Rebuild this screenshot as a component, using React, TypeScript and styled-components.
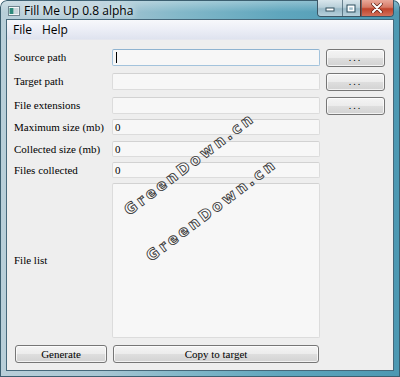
import React from "react";
import styled, { createGlobalStyle } from "styled-components";

const Global = createGlobalStyle`
  html, body { margin: 0; padding: 0; background: #ffffff; }
  #root { width: 400px; height: 377px; }
`;

const Window = styled.div`
  position: relative;
  width: 400px;
  height: 377px;
  box-sizing: border-box;
  display: flex;
  flex-direction: column;
  padding: 0 7px 7px 7px;
  border-radius: 7px 7px 0 0;
  overflow: hidden;
  background:
    linear-gradient(180deg, rgba(255,255,255,0.35) 0px, rgba(255,255,255,0) 12px),
    linear-gradient(90deg, #b9cfd9 0%, #a8c6d3 25%, #83b8c9 45%, #5fa6bd 70%, #4c98b2 100%);
  box-shadow: inset 0 0 0 1px #3c5f70;
`;

const TitleBar = styled.div`
  height: 20px;
  display: flex;
  align-items: flex-start;
  flex-shrink: 0;
`;

const IconBox = styled.div`
  width: 12px;
  height: 10px;
  margin-top: 6px;
  margin-left: 1px;
  display: flex;
`;

const Title = styled.div`
  margin-left: 4px;
  margin-top: 3px;
  font-family: "Open Sans", "Noto Sans", sans-serif;
  font-size: 12px;
  line-height: 16px;
  color: #000;
  text-shadow: 0 0 6px #ffffff, 0 0 10px rgba(255,255,255,0.9);
  flex: 1;
`;

const CaptionGroup = styled.div`
  display: flex;
  height: 16px;
  margin-right: -1px;
  border: 1px solid #3b5665;
  border-top: none;
  border-radius: 0 0 4px 4px;
  overflow: hidden;
`;

const CapBtn = styled.div<{ $w: number; $close?: boolean }>`
  width: ${(p) => p.$w}px;
  height: 16px;
  display: flex;
  align-items: center;
  justify-content: center;
  box-sizing: border-box;
  border-left: ${(p) => (p.$close ? "1px solid #5e3028" : "none")};
  background: ${(p) =>
    p.$close
      ? "linear-gradient(180deg, #e9a99a 0%, #d67a66 45%, #c0442c 55%, #d2705a 100%)"
      : "linear-gradient(180deg, #d8e6ec 0%, #b9d0da 45%, #99b9c7 55%, #b7d1dc 100%)"};
  & + & { box-shadow: inset 1px 0 0 rgba(60,90,105,0.7); }
`;

const Client = styled.div`
  flex: 1;
  display: flex;
  flex-direction: column;
  background: #eeeeee;
  box-shadow: 0 0 0 1px #46687a;
`;

const MenuBar = styled.div`
  height: 20px;
  display: flex;
  align-items: center;
  gap: 10px;
  padding-left: 6px;
  background: linear-gradient(180deg, #f7f8fb 0%, #eceef6 50%, #dfe3ef 100%);
  border-bottom: 1px solid #e4e6ee;
  box-sizing: border-box;
`;

const MenuItem = styled.span`
  font-family: "Open Sans", "Noto Sans", sans-serif;
  font-size: 12px;
  color: #000;
`;

const Form = styled.div`
  flex: 1;
  display: grid;
  grid-template-columns: 92px 208px 59px;
  grid-template-rows: 24px 24px 22px 22px 21px 21px 162px 17px;
  column-gap: 6px;
  padding: 9px 7px 0 7px;
  align-items: start;
`;

const Label = styled.div<{ $h?: number }>`
  font-family: "Liberation Serif", "DejaVu Serif", serif;
  font-size: 11px;
  color: #000;
  line-height: ${(p) => p.$h ?? 17}px;
  white-space: nowrap;
`;

const Field = styled.div<{ $h: number; $focus?: boolean }>`
  height: ${(p) => p.$h}px;
  box-sizing: border-box;
  background: #f7f7f7;
  border: 1px solid ${(p) => (p.$focus ? "#a3c3dc" : "#dcdcdc")};
  border-top-color: ${(p) => (p.$focus ? "#8fb3d0" : "#d2d2d2")};
  border-radius: 2px;
  display: flex;
  align-items: center;
  padding-left: 2px;
  font-family: "Liberation Serif", "DejaVu Serif", serif;
  font-size: 11px;
  color: #000;
`;

const Caret = styled.span`
  width: 1px;
  height: 11px;
  background: #000;
  margin-left: 1px;
`;

const Button = styled.div<{ $w?: number; $ml?: number }>`
  height: 18px;
  width: ${(p) => (p.$w ? `${p.$w}px` : "auto")};
  margin-left: ${(p) => p.$ml ?? 0}px;
  box-sizing: border-box;
  border: 1px solid #767676;
  border-radius: 3px;
  background: linear-gradient(180deg, #f4f4f4 0%, #ececec 48%, #dedede 52%, #d2d2d2 100%);
  box-shadow: inset 0 0 0 1px rgba(255,255,255,0.7);
  display: flex;
  align-items: center;
  justify-content: center;
  font-family: "Liberation Serif", "DejaVu Serif", serif;
  font-size: 11px;
  color: #000;
`;

const Dots = styled.span`
  letter-spacing: 2px;
  font-size: 10px;
  margin-top: -2px;
`;

const Watermark = styled.div<{ $x: number; $y: number }>`
  position: absolute;
  left: ${(p) => p.$x}px;
  top: ${(p) => p.$y}px;
  transform: rotate(-37deg);
  transform-origin: left center;
  font-family: "DejaVu Sans", sans-serif;
  font-weight: bold;
  font-size: 15px;
  letter-spacing: 3px;
  color: #fbfbfb;
  -webkit-text-stroke: 0.9px #3a3a3a;
  white-space: nowrap;
  pointer-events: none;
`;

const AppIcon = () => (
  <svg width="12" height="10" viewBox="0 0 12 10">
    <rect x="0.5" y="0.5" width="11" height="9" fill="#f4f6f7" stroke="#6f8590" />
    <rect x="1.5" y="2" width="4" height="6" fill="#2f8a7c" />
    <rect x="6" y="2" width="4.5" height="6" fill="#c9d6dc" />
  </svg>
);

const MinIcon = () => (
  <svg width="10" height="8" viewBox="0 0 10 8">
    <rect x="1" y="4" width="8" height="3" fill="#fff" stroke="#33505e" strokeWidth="1" />
  </svg>
);

const MaxIcon = () => (
  <svg width="10" height="9" viewBox="0 0 10 9">
    <rect x="1" y="1" width="8" height="7" fill="none" stroke="#33505e" strokeWidth="1" />
    <rect x="2.5" y="2.5" width="5" height="4" fill="none" stroke="#fff" strokeWidth="1.4" />
  </svg>
);

const CloseIcon = () => (
  <svg width="12" height="10" viewBox="0 0 12 10">
    <path d="M2 1 L10 9 M10 1 L2 9" stroke="#5a1f14" strokeWidth="3.4" strokeLinecap="round" />
    <path d="M2 1 L10 9 M10 1 L2 9" stroke="#ffffff" strokeWidth="2" strokeLinecap="round" />
  </svg>
);

export default function App() {
  return (
    <>
      <Global />
      <Window>
        <TitleBar>
          <IconBox>
            <AppIcon />
          </IconBox>
          <Title>Fill Me Up 0.8 alpha</Title>
          <CaptionGroup>
            <CapBtn $w={24}>
              <MinIcon />
            </CapBtn>
            <CapBtn $w={18}>
              <MaxIcon />
            </CapBtn>
            <CapBtn $w={33} $close>
              <CloseIcon />
            </CapBtn>
          </CaptionGroup>
        </TitleBar>
        <Client>
          <MenuBar>
            <MenuItem>File</MenuItem>
            <MenuItem>Help</MenuItem>
          </MenuBar>
          <Form>
            <Label>Source path</Label>
            <Field $h={17} $focus>
              <Caret />
            </Field>
            <Button>
              <Dots>...</Dots>
            </Button>

            <Label>Target path</Label>
            <Field $h={17} />
            <Button>
              <Dots>...</Dots>
            </Button>

            <Label>File extensions</Label>
            <Field $h={17} />
            <Button>
              <Dots>...</Dots>
            </Button>

            <Label $h={16}>Maximum size (mb)</Label>
            <Field $h={16}>0</Field>
            <span />

            <Label $h={16}>Collected size (mb)</Label>
            <Field $h={16}>0</Field>
            <span />

            <Label $h={16}>Files collected</Label>
            <Field $h={16}>0</Field>
            <span />

            <Label $h={155}>File list</Label>
            <Field $h={155} />
            <span />

            <Button $w={92} $ml={1}>Generate</Button>
            <Button $w={206} $ml={1}>Copy to target</Button>
            <span />
          </Form>
        </Client>
        <Watermark $x={126} $y={203}>GreenDown.cn</Watermark>
        <Watermark $x={148} $y={249}>GreenDown.cn</Watermark>
      </Window>
    </>
  );
}
